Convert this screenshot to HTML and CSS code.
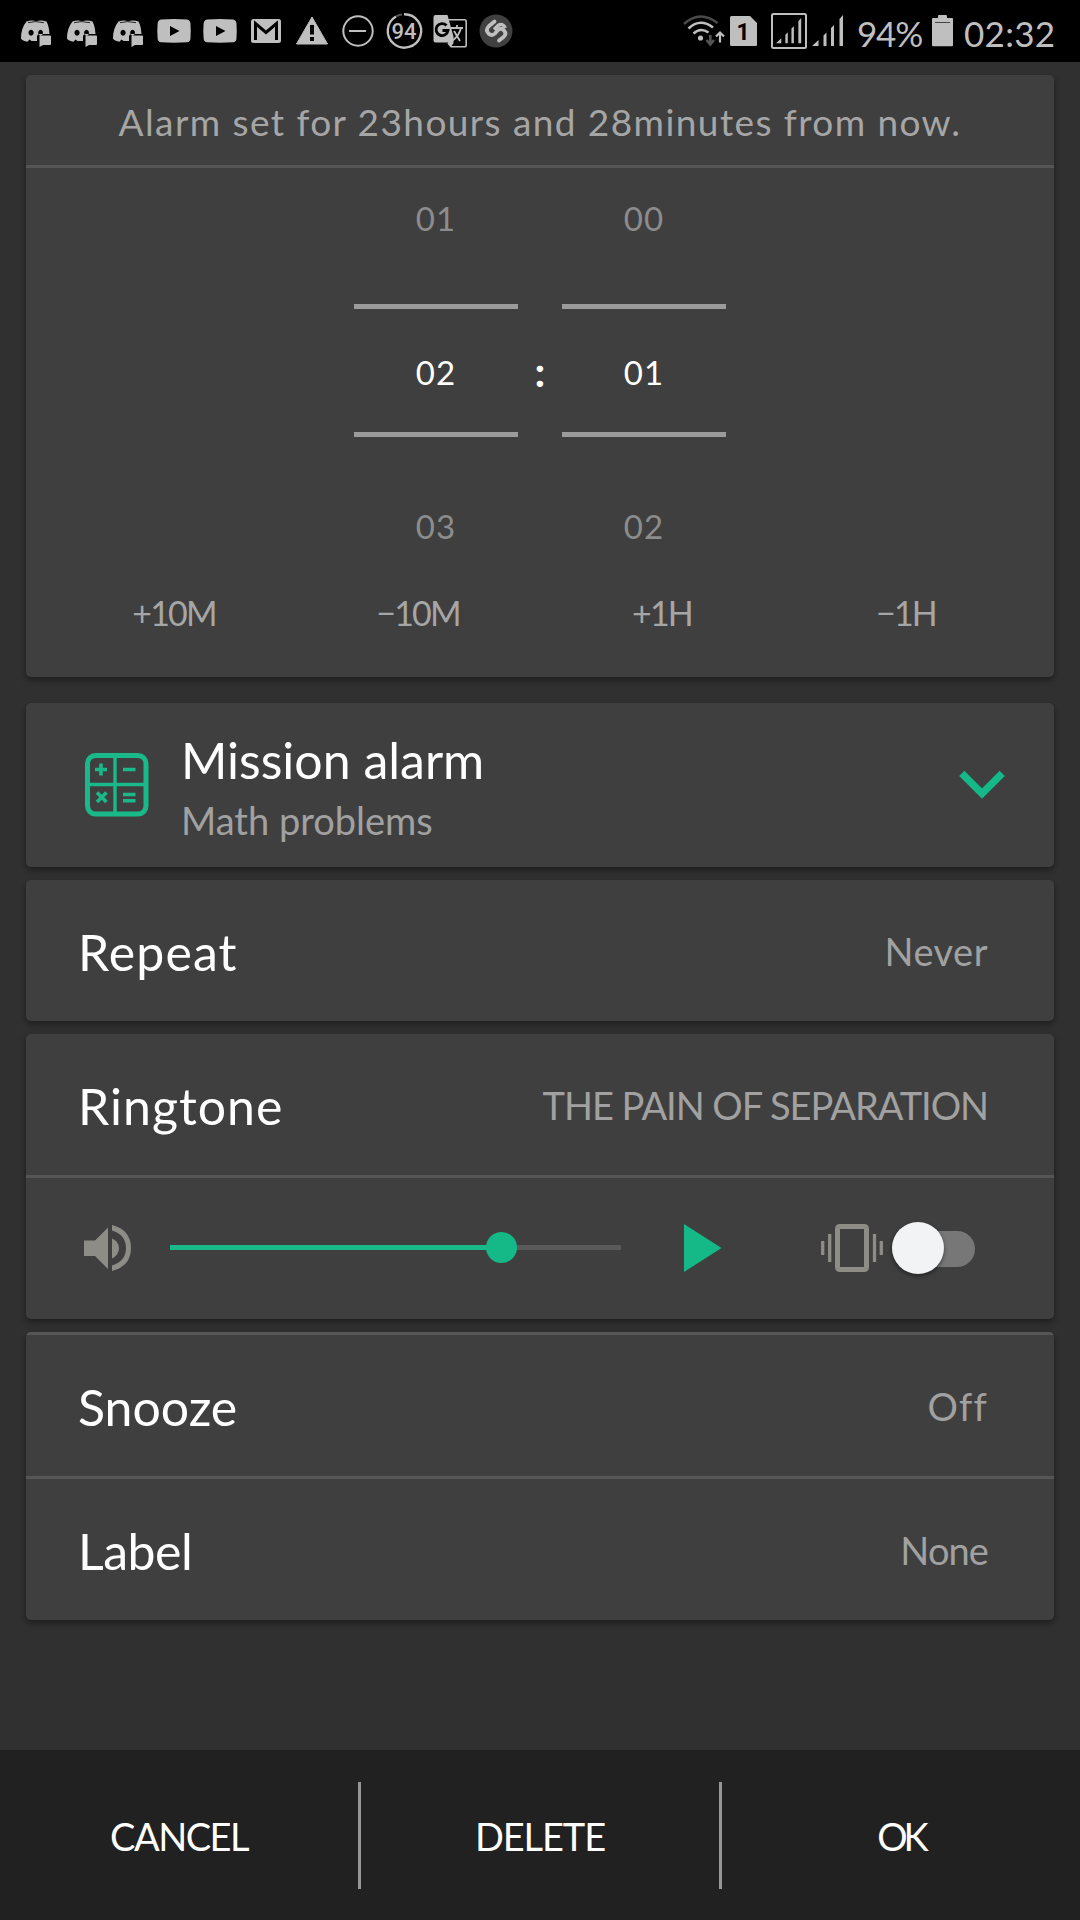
FILE: index.html
```html
<!DOCTYPE html>
<html lang="en">
<head>
<meta charset="utf-8">
<title>Edit alarm</title>
<link rel="stylesheet" href="styles.css">
</head>
<body>
<svg class="defs" width="0" height="0" aria-hidden="true">
  <symbol id="discord" viewBox="0 0 46 62">
    <path fill="#bfbfbf" fill-rule="evenodd" d="M13.500 21.500Q19 19.500 23 21.300Q28 19.500 33.500 21.500Q36 26 36.500 34H27Q24 34 24 37V41H18.500L16.500 39.500L14.500 41.700Q9.500 41 8 38.500Q8 28 13.500 21.500ZM18 29.800a2.600 3 0 1 0 .1 0ZM27.500 29.800a2.400 3 0 1 0 .1 0Z"/>
    <path d="M15 22.700Q22 20.500 31 22.700" fill="none" stroke="#000" stroke-width=".8"/>
    <path fill="#bfbfbf" d="M27 35.500H37Q38 35.500 38 36.500V44Q38 45 37 45H30L26.500 47V36.500Q26.500 35.500 27 35.500Z"/>
  </symbol>
  <symbol id="youtube" viewBox="0 0 46 62">
    <path fill="#bfbfbf" fill-rule="evenodd" d="M10 19.500Q23 18.500 36 19.500Q39.500 20 39.500 24Q40 31 39.500 38Q39.500 42 36 42.300Q23 43 10 42.300Q6.700 42 6.600 38Q6 31 6.600 24Q6.700 20 10 19.500ZM19 26V36L28.500 31Z"/>
  </symbol>
  <symbol id="bars" viewBox="0 0 32 32">
    <path fill="#bfbfbf" d="M0 31L6.500 25V31ZM11.500 31V20.500L14.500 17.500V31ZM19 31V13L22 10V31ZM27.500 31V4L31 0V31Z"/>
  </symbol>
</svg>
<div class="screen">
  <header class="status">
    <div class="status-left">
      <svg class="cell"><use href="#discord"/></svg>
      <svg class="cell"><use href="#discord"/></svg>
      <svg class="cell"><use href="#discord"/></svg>
      <svg class="cell"><use href="#youtube"/></svg>
      <svg class="cell"><use href="#youtube"/></svg>
      <svg class="cell" viewBox="0 0 46 62"><rect x="8" y="19" width="30" height="24" rx="2.500" fill="#bfbfbf"/><path d="M12.500 40V23.500L23 32.500L33.500 23.500V40" fill="none" stroke="#000" stroke-width="3"/></svg>
      <svg class="cell" viewBox="0 0 46 62"><path d="M23 17L38.500 44H7.500Z" fill="#bfbfbf" stroke="#bfbfbf" stroke-linejoin="round"/><path d="M23 25V34.500M23 37V41" stroke="#000" stroke-width="4"/></svg>
      <svg class="cell" viewBox="0 0 46 62"><circle cx="23" cy="31" r="14.700" fill="none" stroke="#bfbfbf" stroke-width="2"/><path d="M14 31H31" stroke="#bfbfbf" stroke-width="2"/></svg>
      <svg class="cell" viewBox="0 0 46 62"><path d="M23 14.200A16.700 16.700 0 1 1 15 16.500" fill="none" stroke="#bfbfbf" stroke-width="2.400"/><path d="M15 16.500Q18 14.600 21 14.500" fill="none" stroke="#555" stroke-width="2"/><text x="23" y="38.500" class="badge">94</text></svg>
      <svg class="cell" viewBox="0 0 46 62"><path d="M21 19.800H37.500Q39.200 19.800 39.200 21.500V45Q39.200 46.800 37.500 46.800H24L21 43" fill="none" stroke="#bfbfbf" stroke-width="1.600"/><path d="M8.500 15H20.500L26.500 36.500V43L24 47L21 42.500H8.500Q6.500 42.500 6.500 40.500V17Q6.500 15 8.500 15Z" fill="#bfbfbf"/><path d="M19.500 25.500A6 6 0 1 0 21 30.500H15.500" fill="none" stroke="#000" stroke-width="2.800"/><path d="M24 28H36M30 25V28M34 28Q32 36 25 41M27 31L33 41" fill="none" stroke="#bfbfbf" stroke-width="1.800"/></svg>
      <svg class="cell" viewBox="0 0 46 62"><circle cx="23" cy="31" r="16.500" fill="#404040"/><path d="M21.500 21.500L16 26Q12 30 15.500 33.500Q19 36.500 22 33.500L24.500 30.500Q28 27 31 30.500Q34 34 30.500 37L26 40.500" fill="none" stroke="#bfbfbf" stroke-width="3.800" stroke-linecap="round" stroke-linejoin="round"/><path d="M21 29.500L25 25.500Q29.500 22.500 32.500 28M23.500 34.500" fill="none" stroke="#bfbfbf" stroke-width="3.400"/></svg>
    </div>
    <div class="status-right">
      <svg class="wifi" width="42" height="32" viewBox="0 0 42 32"><g fill="none" stroke-width="2.600"><path d="M1 9Q17 -5.500 34.500 8" stroke="#4a4a4a"/><path d="M5.500 13.500Q17 2.500 30 12.500M10.500 18.500Q17.500 12 25.500 17.500" stroke="#bfbfbf"/></g><circle cx="17.500" cy="23" r="2.600" fill="#bfbfbf"/><path d="M27.300 20V28M23.500 25L27.300 29.500L31 25" fill="none" stroke="#555" stroke-width="2.600"/><path d="M37 27.500V19M33 21.500L37 17.500L41 21.500" fill="none" stroke="#bfbfbf" stroke-width="2.200"/></svg>
      <svg class="sim" width="28" height="31" viewBox="0 0 28 31"><path fill="#bfbfbf" d="M1.500 0H20L27 7V29Q27 30 26 30H1.500Q0 30 0 28.500V1.500Q0 0 1.500 0Z"/><text x="13" y="23.500" class="sim-no">1</text></svg>
      <svg class="boxed" width="36" height="36" viewBox="0 0 36 36"><rect x="1" y="1" width="34" height="34" rx="1.500" fill="none" stroke="#bfbfbf" stroke-width="2"/><use href="#bars" x="5" y="5" width="26" height="26"/></svg>
      <svg class="signal" width="32" height="32"><use href="#bars"/></svg>
      <span class="pct">94%</span>
      <svg class="battery" width="22" height="32" viewBox="0 0 22 32"><path fill="#bfbfbf" d="M6 3V1Q6 0 7 0H14Q15 0 15 1V3H20Q21 3 21 4V30Q21 31.300 20 31.300H1Q0 31.300 0 30V4Q0 3 1 3Z"/><path d="M3 7.500H18" stroke="#444" stroke-width="1"/></svg>
      <span class="clock">02:32</span>
    </div>
  </header>

  <main class="content">
    <section class="card time-card">
      <p class="notice">Alarm set for 23hours and 28minutes from now.</p>
      <div class="picker">
        <div class="wheel"><span class="num dim">01</span><span class="num current">02</span><span class="num dim">03</span></div>
        <span class="colon">:</span>
        <div class="wheel"><span class="num dim">00</span><span class="num current">01</span><span class="num dim">02</span></div>
      </div>
      <div class="adjust"><span>+10M</span><span>−10M</span><span>+1H</span><span>−1H</span></div>
    </section>

    <section class="card mission">
      <svg class="calc" width="64" height="64" viewBox="0 0 64 64" fill="none" stroke="#1ab98a"><rect x="2.500" y="2.500" width="58.500" height="58.500" rx="8" stroke-width="5"/><path d="M30 3V61M3 31.500H61" stroke-width="3.400"/><path d="M10 16.500H22M16 10.500V22.500M38 16.500H50.500M38 41.500H50.500M38 47.700H50.500M12 39.500L21.500 49M21.500 39.500L12 49" stroke-width="3.600"/></svg>
      <div class="mission-text"><span class="title t-mission">Mission alarm</span><span class="value">Math problems</span></div>
      <svg class="chevron" width="46" height="30" viewBox="0 0 46 30"><path d="M2.800 3.300L23 23.500L43.200 3.300" fill="none" stroke="#15b887" stroke-width="7.400"/></svg>
    </section>

    <section class="card"><div class="row"><span class="title t-repeat">Repeat</span><span class="value t-never">Never</span></div></section>

    <section class="card">
      <div class="row"><span class="title t-ringtone">Ringtone</span><span class="value t-song">THE PAIN OF SEPARATION</span></div>
      <div class="row divided sound">
        <svg class="speaker" width="48" height="48" viewBox="0 0 48 48"><path fill="#8d8c86" d="M0 16.500H11L24 3.500V45L11 32H0ZM28 14.500Q35 17.500 35 24.200T28 34.500ZM28 1Q47 6 47 24T28 47V41.500Q42 37 42 24T28 6.500Z"/></svg>
        <div class="slider"><div class="fill"></div><div class="knob"></div></div>
        <svg class="play" width="38" height="48" viewBox="0 0 38 48"><path d="M0 0L37.500 24L0 48Z" fill="#15b887"/></svg>
        <svg class="vibrate" width="62" height="48" viewBox="0 0 62 48"><rect x="16.500" y="2.500" width="29" height="43" rx="2" fill="none" stroke="#8d8c86" stroke-width="5"/><path d="M1.700 17V31M8.700 10V38M53.500 10V38M60.300 17V31" stroke="#8d8c86" stroke-width="3.300"/></svg>
        <div class="toggle"><div class="thumb"></div></div>
      </div>
    </section>

    <section class="card">
      <div class="row divided"><span class="title">Snooze</span><span class="value t-off">Off</span></div>
      <div class="row divided"><span class="title t-label">Label</span><span class="value t-none">None</span></div>
    </section>
  </main>

  <footer class="actions">
    <span class="action t-cancel">CANCEL</span><span class="action t-delete">DELETE</span><span class="action t-ok">OK</span>
  </footer>
</div>
</body>
</html>
```
FILE: styles.css
```css
* { box-sizing: border-box; }
body { margin: 0; background: #303030; font-family: "Choco Cooky", Lato, sans-serif; color: #fff; }
.defs { position: absolute; }
.screen { width: 1080px; height: 1920px; display: flex; flex-direction: column; background: #303030; overflow: hidden; }

.status { height: 62px; flex: none; background: #000; color: #bfbfbf; display: flex; justify-content: space-between; padding: 0 25px 0 13px; }
.status-left { display: flex; }
.cell { width: 46px; height: 62px; }
.badge { font: 500 22px Roboto, sans-serif; fill: #bfbfbf; text-anchor: middle; }
.sim-no { font: 700 23px Roboto, sans-serif; fill: #000; text-anchor: middle; }
.status-right { display: flex; align-items: center; font-size: 35px; }
.sim { margin-left: 5px; }
.boxed { margin-left: 13px; }
.signal { margin-left: 5px; }
.pct { width: 65px; margin-left: 13px; margin-top: 3px; letter-spacing: -1.2px; }
.battery { margin-left: 10px; }
.clock { width: 91px; margin-left: 10px; margin-top: 3px; letter-spacing: .3px; }

.content { flex: 1; padding: 13px 26px; display: flex; flex-direction: column; gap: 13px; }
.card { background: #3f3f3f; border-radius: 5px; box-shadow: 0 3px 6px rgba(0, 0, 0, .4); overflow: hidden; flex: none; }

.time-card { height: 602px; margin-bottom: 13px; }
.notice { margin: 0; height: 93px; padding-top: 2px; border-bottom: 3px solid #565656; display: flex; align-items: center; justify-content: center; font-size: 37px; letter-spacing: 1.42px; color: #a6a6a6; white-space: nowrap; }
.picker { height: 406px; display: flex; justify-content: center; align-items: center; font-size: 33px; }
.wheel { width: 164px; display: grid; grid-template-rows: 136px 133px 137px; text-align: center; letter-spacing: 1px; }
.num { display: flex; align-items: center; justify-content: center; }
.dim { color: #8c8c8c; }
.dim:first-child { padding-bottom: 36px; }
.dim:last-child { padding-top: 40px; }
.current { border-top: 5px solid #9b9b9b; border-bottom: 5px solid #9b9b9b; padding-top: 2px; }
.colon { width: 44px; text-align: center; font-size: 42px; font-weight: 700; line-height: 50px; }
.adjust { display: grid; grid-template-columns: repeat(4, 244px); justify-content: center; text-align: center; font-size: 34px; letter-spacing: -1.8px; line-height: 46px; margin-top: 16px; color: #a6a6a6; }

.title { font-size: 50px; color: #fff; white-space: nowrap; padding-top: 2px; }
.value { font-size: 38px; color: #a1a1a1; white-space: nowrap; }
.row { height: 141px; padding: 0 66px 0 52px; display: flex; align-items: center; justify-content: space-between; }
.divided { height: 144px; border-top: 3px solid #565656; }

.mission { height: 164px; display: flex; align-items: center; padding: 0 49px 0 59px; }
.mission-text { flex: 1; display: flex; flex-direction: column; margin-left: 32px; padding-top: 8px; line-height: 60px; }
.t-repeat { letter-spacing: 1.1px; }
.t-ringtone { letter-spacing: 1px; }
.t-never { letter-spacing: .5px; }
.t-song { letter-spacing: -1.05px; }
.t-off { letter-spacing: 1.2px; }
.t-label { letter-spacing: -.5px; }
.t-none { letter-spacing: -.9px; }
.t-cancel { letter-spacing: -1.5px; }
.t-delete { letter-spacing: -1.1px; }
.t-ok { letter-spacing: -4px; }

.sound { padding: 0 78px 2px 58px; justify-content: flex-start; }
.slider { width: 451px; height: 5px; margin-left: 38px; background: #5a5a5a; display: flex; align-items: center; }
.fill { width: 320px; height: 5px; background: #1ab98a; }
.knob { width: 31px; height: 31px; border-radius: 50%; background: #15b887; margin-left: -4px; flex: none; }
.play { margin-left: 63px; }
.vibrate { margin-left: 99px; }
.toggle { width: 83px; height: 36px; margin: 3px 0 0 9px; border-radius: 18px; background: #777; display: flex; align-items: center; }
.thumb { width: 52px; height: 52px; flex: none; border-radius: 50%; background: #f2f3f5; box-shadow: 0 2px 4px rgba(0, 0, 0, .45); margin-top: -3px; }

.actions { height: 170px; flex: none; background: #212121; display: grid; grid-template-columns: 361px 361px 358px; align-items: center; font-size: 38px; }
.action { height: 107px; display: flex; align-items: center; justify-content: center; padding-top: 2px; border-right: 3px solid #969696; }
.action:last-child { border-right: 0; }
```
